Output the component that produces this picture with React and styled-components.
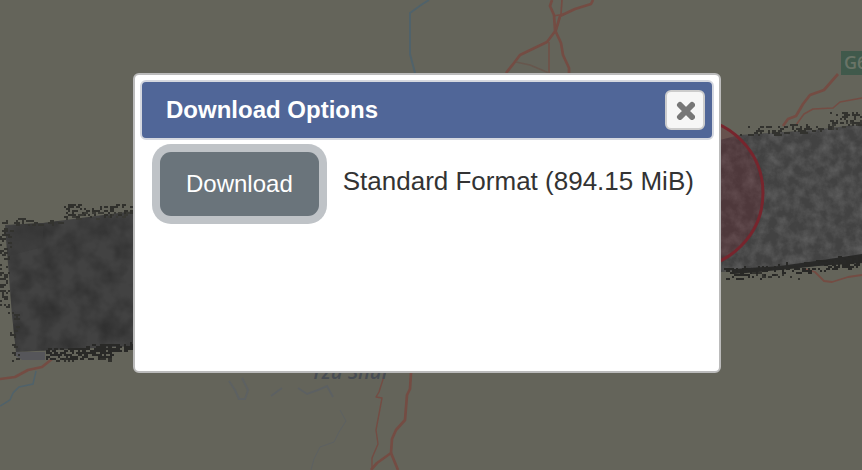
import React from "react";
import styled, { createGlobalStyle } from "styled-components";

// edges of the imagery strip: x1, y1, x2, y2, spread, amount, colour
const edges = [
    [0, 219, 44, 223, 6, 26, "#33332f"],
    [44, 222, 66, 220, 4, 10, "#33332f"],
    [64, 210, 134, 210, 9, 95, "#30302c"],
    [66, 216, 134, 213, 5, 24, "#3a3a35"],
    [3, 226, 3, 308, 9, 100, "#32322e"],
    [12, 310, 14, 360, 5, 22, "#32322e"],
    [45, 353, 110, 353, 9, 110, "#292927"],
    [80, 349, 134, 345, 6, 90, "#292927"],
    [56, 359, 72, 359, 2, 8, "#30302c"],
    [100, 359, 110, 359, 1, 8, "#30302c"],
    [738, 131, 808, 128, 7, 56, "#32322e"],
    [796, 130, 832, 127, 4, 20, "#32322e"],
    [829, 118, 862, 118, 9, 44, "#32322e"],
    [828, 126, 862, 123, 4, 16, "#3a3a35"],
    [721, 273, 775, 271, 9, 70, "#282826"],
    [775, 269, 862, 260, 9, 90, "#282826"],
    [752, 275, 800, 275, 4, 12, "#32322e"],
    [832, 264, 862, 263, 8, 28, "#282826"],
];

// same sequence on every load
function makeRandom(seed) {
    let value = seed;
    return () => {
        value = (value * 16807) % 2147483647;
        return value / 2147483647;
    };
}

function buildSpeckles() {
    const random = makeRandom(4127);
    return edges.map(([x1, y1, x2, y2, spread, amount, color]) => {
        let d = "";
        for (let i = 0; i < amount; i++) {
            const t = random();
            const dx = Math.abs(x2 - x1) < 5 ? (random() - 0.5) * spread * 1.4 : 0;
            const dy = dx ? 0 : (random() - 0.5) * spread * 1.3;
            const x = Math.round((x1 + (x2 - x1) * t + dx) / 2) * 2;
            const y = Math.round((y1 + (y2 - y1) * t + dy) / 2) * 2;
            const width = random() > 0.7 ? 4 : 2;
            d += `M${x} ${y}h${width}v2h-${width}z`;
        }
        return { d, color };
    });
}

const speckles = buildSpeckles();

function MapBackdrop() {
    return (
        <MapDrawing viewBox="0 0 862 470" preserveAspectRatio="xMidYMid slice" aria-hidden="true">
            <defs>
                <filter id="terrain" x="0" y="0" width="100%" height="100%" colorInterpolationFilters="sRGB">
                    <feTurbulence type="fractalNoise" baseFrequency="0.05" numOctaves="3" seed="8" />
                    <feColorMatrix values="0 0 0 0 0.16  0 0 0 0 0.16  0 0 0 0 0.16  1.6 0 0 0 -0.55" />
                    <feComposite in2="SourceGraphic" operator="in" />
                </filter>
                <filter id="grain" x="0" y="0" width="100%" height="100%" colorInterpolationFilters="sRGB">
                    <feTurbulence type="fractalNoise" baseFrequency="0.09" numOctaves="4" seed="3" />
                    <feColorMatrix values="0 0 0 0 0.42  0 0 0 0 0.42  0 0 0 0 0.42  1.5 0 0 0 -0.5" />
                    <feComposite in2="SourceGraphic" operator="in" />
                </filter>
            </defs>

            <rect width="862" height="470" fill="#64645a" />

            <g fill="none" stroke="#50626a" strokeWidth="2">
                <path d="M429 0L421 5L410 13L410 54L415 73" />
                <path d="M36 371L33 384L19 387L13 393L10 400L0 406" strokeWidth="1.5" />
            </g>
            <g fill="none" stroke="#5b6064" strokeWidth="2" opacity="0.8">
                <path d="M229 381L235 390L239 399L245 399L248 390L242 378" />
                <path d="M271 396L282 388M298 388L307 394L318 390L327 386L333 397" />
                <path d="M340 410L346 421L339 432L334 442L320 447L314 459L311 470" strokeWidth="1" />
            </g>

            <g fill="none" stroke="#744c43" strokeWidth="2.7" strokeLinejoin="round">
                <path d="M593 0L591 4L575 9L560 16L556 30L547 42L520 55L514 63L506 73" />
                <path d="M552 0L550 6L554 15L555 30L561 43L563 55L569 68L569 73" />
                <path d="M562 0L561 14L556 30M553 16L565 14" strokeWidth="1.7" />
                <path d="M549 42L549 73" strokeWidth="1.3" />
                <path d="M516 62L530 65L549 73" stroke="#67574d" strokeWidth="1.7" />
                <path d="M783 126L788 119L796 116L803 104L810 95L824 90L831 82L838 74" />
                <path d="M796 125L804 114L813 109L833 108L840 102L862 98" strokeWidth="1.5" />
                <path d="M805 269L815 272L824 281L832 282L848 277L862 275" strokeWidth="1.8" />
                <path d="M0 379L15 377L28 370L42 367L52 359" />
                <path d="M411 373L410 389L407 395L405 420L396 430L392 439L391 453L377 463L371 470" />
                <path d="M391 453L398 470" />
                <path d="M385 373L379 392L376 397L382 398L376 430L378 444L372 458L372 470" strokeWidth="1.4" />
            </g>

            <path d="M5 225L43 223L134 211L134 346L16 352L12 315Z" fill="#424242" />
            <path d="M5 225L43 223L134 211L134 346L16 352L12 315Z" fill="#000" filter="url(#terrain)" opacity="0.8" />
            <path d="M8 226L43 223L43 247L12 255Z" fill="#393939" opacity="0.5" />
            <path d="M16 352H45V360H22L16 356Z" fill="#56565a" />
            <path d="M720 140L740 135L815 130L862 124V263L720 272Z" fill="#424242" />
            <path d="M720 140L740 135L815 130L862 124V263L720 272Z" fill="#fff" filter="url(#grain)" opacity="0.8" />
            <path d="M734 269L780 266L816 261L862 254V263L818 266L780 270L734 274Z" fill="#292928" />
            {speckles.map((item, index) => (
                <path d={item.d} fill={item.color} key={index} />
            ))}

            <circle cx="688" cy="193" r="75" fill="#70202c" fillOpacity="0.28" stroke="#77252d" strokeWidth="3" />
            <rect x="841" y="51" width="40" height="24" fill="#40594b" />
            <MapText x="844" y="69" fill="#6a7467" fontSize="18">G6</MapText>
            <MapText x="311" y="379" fill="#474c53" fontSize="20" fontStyle="italic">Yzu Shur</MapText>
        </MapDrawing>
    );
}

function CloseIcon() {
    return (
        <svg width="20" height="20" viewBox="0 0 20 20" aria-hidden="true">
            <path d="M5 5L17 17M17 5L5 17" stroke="#777" strokeWidth="6" strokeLinecap="round" fill="none" />
        </svg>
    );
}

export default function App() {
    return (
        <>
            <GlobalStyle />
            <Page>
                <MapBackdrop />
                <Dialog role="dialog" aria-labelledby="dialog-title">
                    <TitleBar>
                        <Title id="dialog-title">Download Options</Title>
                        <CloseButton type="button" aria-label="Close">
                            <CloseIcon />
                        </CloseButton>
                    </TitleBar>
                    <OptionRow>
                        <DownloadButton type="button">Download</DownloadButton>
                        <OptionName>Standard Format (894.15 MiB)</OptionName>
                    </OptionRow>
                </Dialog>
            </Page>
        </>
    );
}

const GlobalStyle = createGlobalStyle`
    * {
        box-sizing: border-box;
    }

    body {
        margin: 0;
        font-family: "Liberation Sans", Arial, sans-serif;
    }
`;

const Page = styled.main`
    position: relative;
    display: flex;
    justify-content: center;
    align-items: center;
    min-height: 100vh;
    padding: 16px 24px 40px 16px;
    overflow: hidden;
    background: #64645a;
`;

const MapDrawing = styled.svg`
    position: absolute;
    inset: 0;
    width: 100%;
    height: 100%;
`;

const MapText = styled.text`
    font-family: "Open Sans", sans-serif;
    font-weight: 600;
`;

const Dialog = styled.section`
    position: relative;
    width: 100%;
    max-width: 588px;
    min-height: 300px;
    padding: 5px;
    border: 2px solid #bbb;
    border-radius: 6px;
    background: white;
`;

const TitleBar = styled.header`
    display: flex;
    justify-content: space-between;
    align-items: center;
    padding: 8px 7px 8px 24px;
    border: 2px solid #d5d8e0;
    border-radius: 6px;
    background: #506698;
`;

const Title = styled.h1`
    margin: 0;
    color: white;
    font-size: 24px;
    font-weight: bold;
    line-height: 32px;
`;

const CloseButton = styled.button`
    display: flex;
    justify-content: center;
    align-items: center;
    width: 40px;
    height: 40px;
    padding: 0;
    border: 2px solid #ccc;
    border-radius: 6px;
    background: #f6f6f6;
    cursor: pointer;
`;

const OptionRow = styled.div`
    display: flex;
    align-items: flex-start;
    gap: 24px;
    padding: 12px 20px;
`;

const DownloadButton = styled.button`
    padding: 16px 26px;
    border: 0;
    border-radius: 11px;
    background: #6a747b;
    box-shadow: 0 0 0 8px #bfc3c7;
    color: white;
    font-family: inherit;
    font-size: 24px;
    line-height: 32px;
    cursor: pointer;
`;

const OptionName = styled.span`
    padding-top: 13px;
    color: #333;
    font-size: 26px;
    line-height: 32px;
`;
